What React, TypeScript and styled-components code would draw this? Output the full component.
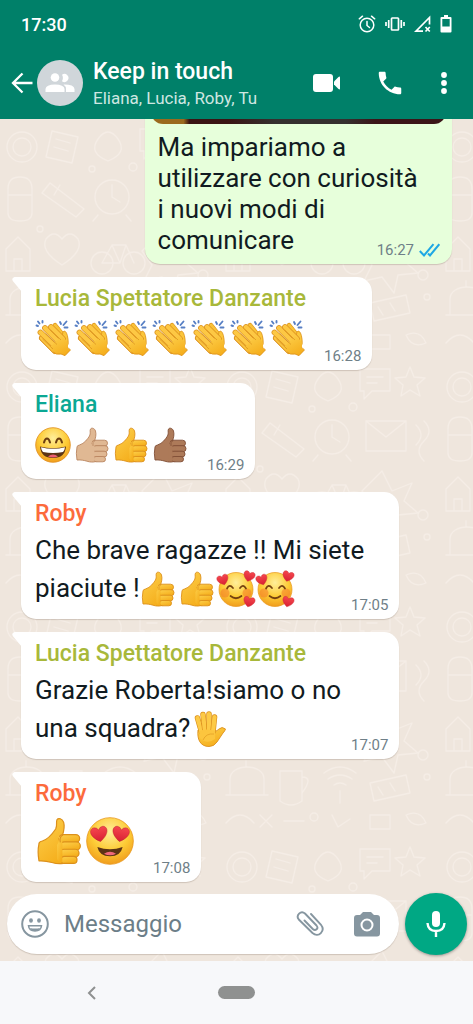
import React from "react";
import styled, { createGlobalStyle } from "styled-components";

const GlobalStyle = createGlobalStyle`
  *, *::before, *::after { box-sizing: border-box; }
  body { margin: 0; font-family: Roboto, "Liberation Sans", sans-serif; color: #111b21; }
  button { border: 0; padding: 0; background: none; color: inherit; font: inherit; cursor: pointer; }
  svg { display: block; flex: none; }
`;

const Screen = styled.div`
  display: flex;
  flex-direction: column;
  height: 100vh;
  overflow: hidden;
`;

const Header = styled.header`
  background: #008069;
  color: #fff;
  padding-bottom: 12px;
  z-index: 1;
`;

const StatusBar = styled.div`
  display: flex;
  align-items: center;
  justify-content: space-between;
  height: 48px;
  padding: 0 21px;
`;

const Clock = styled.time`
  font-size: 18px;
  font-weight: 500;
`;

const StatusIcons = styled.div`
  display: flex;
  align-items: center;
  gap: 9px;
`;

const Toolbar = styled.div`
  display: flex;
  align-items: center;
  height: 59px;
  padding: 10px 11px 0 10px;
`;

const IconButton = styled.button<{ $width: number }>`
  display: flex;
  align-items: center;
  justify-content: center;
  width: ${(p) => p.$width}px;
  height: 48px;
  flex: none;
`;

const Avatar = styled.div`
  display: flex;
  align-items: center;
  justify-content: center;
  width: 46px;
  height: 46px;
  margin: 0 10px 0 4px;
  border-radius: 50%;
  background: #d0d6da;
  flex: none;
`;

const Titles = styled.div`
  flex: 1;
  min-width: 0;
  padding-top: 3px;
`;

const Title = styled.h1`
  margin: 0;
  font-size: 23px;
  line-height: 28px;
  font-weight: 500;
`;

const Subtitle = styled.p`
  margin: 0;
  font-size: 17px;
  line-height: 24px;
  color: #cfe7e2;
  white-space: nowrap;
  overflow: hidden;
  text-overflow: ellipsis;
`;

const Chat = styled.main`
  position: relative;
  display: flex;
  flex-direction: column;
  flex: 1;
  min-height: 0;
  overflow: hidden;
  background: #efe6dd;
`;

const Wallpaper = styled.svg`
  position: absolute;
  inset: 0;
  width: 100%;
  height: 100%;
`;

const Messages = styled.ul`
  position: relative;
  display: flex;
  flex-direction: column;
  justify-content: flex-end;
  gap: 13px;
  flex: 1;
  min-height: 0;
  margin: 0;
  padding: 0 21px;
  list-style: none;
`;

const Bubble = styled.li<{ $own?: boolean }>`
  position: relative;
  display: flow-root;
  flex: none;
  align-self: ${(p) => (p.$own ? "flex-end" : "flex-start")};
  width: ${(p) => (p.$own ? "65vw" : "fit-content")};
  max-width: 80vw;
  padding: ${(p) => (p.$own ? "5px 6px 8px" : "8px 11px 12px 14px")};
  border-radius: ${(p) => (p.$own ? "15px" : "0 15px 15px 15px")};
  background: ${(p) => (p.$own ? "#e7ffdb" : "#fff")};
  box-shadow: 0 1px 1px rgba(80, 60, 40, 0.2);
`;

const TailShape = styled.svg`
  position: absolute;
  left: -9px;
  top: 0;
`;

const Sender = styled.div<{ $color: string }>`
  margin-bottom: 3px;
  font-size: 23px;
  line-height: 28px;
  font-weight: 500;
  color: ${(p) => p.$color};
`;

const Text = styled.p<{ $line: number }>`
  margin: 0;
  font-size: 26px;
  line-height: ${(p) => p.$line}px;
`;

const OwnText = styled(Text)`
  padding: 8px 17px 0 7px;
`;

const Stamp = styled.span<{ $line: number; $own?: boolean }>`
  float: right;
  display: flex;
  align-items: center;
  gap: 5px;
  margin: ${(p) =>
    p.$own ? `${p.$line - 16}px -11px -4px 16px` : `${p.$line - 12}px 0 -8px 16px`};
  font-size: 15px;
  line-height: 20px;
  color: #6f7f88;
`;

const Photo = styled.div`
  height: 60px;
  border-radius: 12px;
  background: linear-gradient(90deg, #9b6a1e 0 11%, #3a1413 13% 26%, #35302f 42% 66%, #3b1518 76% 100%);
`;

const EmojiSvg = styled.svg`
  display: inline-block;
  vertical-align: middle;
  margin: -3px 3px 0 0;
  overflow: visible;
`;

const Composer = styled.form`
  position: relative;
  display: flex;
  align-items: center;
  gap: 6px;
  padding: 11px 6px 6px 7px;
`;

const Field = styled.div`
  display: flex;
  align-items: center;
  flex: 1;
  min-width: 0;
  height: 60px;
  padding: 0 4px 0 7px;
  border-radius: 30px;
  background: #fff;
  box-shadow: 0 1px 1px rgba(80, 60, 40, 0.2);
`;

const MessageInput = styled.input`
  flex: 1;
  min-width: 0;
  border: 0;
  outline: 0;
  padding: 0 0 0 8px;
  background: none;
  font: inherit;
  font-size: 24px;
  &::placeholder { color: #6c7e88; opacity: 1; }
`;

const MicButton = styled.button`
  display: flex;
  align-items: center;
  justify-content: center;
  width: 62px;
  height: 62px;
  flex: none;
  border-radius: 50%;
  background: #00a884;
  box-shadow: 0 1px 3px rgba(0, 0, 0, 0.35);
`;

const SystemNav = styled.nav`
  display: grid;
  grid-template-columns: 1fr auto 1fr;
  align-items: center;
  height: 63px;
  flex: none;
  background: #f7f8fa;
`;

const NavBack = styled.button`
  justify-self: center;
  margin-right: 36px;
`;

const NavHome = styled.button`
  width: 37px;
  height: 13px;
  border-radius: 7px;
  background: #8f9190;
`;

const HiddenDefs = styled.svg`
  position: absolute;
`;

const Defs = () => (
  <HiddenDefs width="0" height="0" aria-hidden="true">
    <defs>
      <radialGradient id="face" cx=".5" cy=".3" r=".75">
        <stop offset="0" stopColor="#ffee9a" />
        <stop offset=".55" stopColor="#fdcb35" />
        <stop offset="1" stopColor="#ee9519" />
      </radialGradient>
      <linearGradient id="skin" x1="0" y1="0" x2=".6" y2="1">
        <stop offset="0" stopColor="#fdd14d" />
        <stop offset="1" stopColor="#f5ae1c" />
      </linearGradient>
      <linearGradient id="heart" x1="0" y1="0" x2="0" y2="1">
        <stop offset="0" stopColor="#f5474e" />
        <stop offset="1" stopColor="#d81f32" />
      </linearGradient>
    </defs>
  </HiddenDefs>
);

type EmojiProps = { size?: number; label: string; children: React.ReactNode };
const Emoji = ({ size = 36, label, children }: EmojiProps) => (
  <EmojiSvg width={size} height={size} viewBox="0 0 36 36" role="img" aria-label={label}>
    {children}
  </EmojiSvg>
);

const clapFingers = ["M7 18L20 31", "M5.5 12.5L22 28", "M10 8L25 23", "M16 7L28 19"];
const Clap = () => (
  <Emoji label="applauso">
    <g strokeLinecap="round" fill="none">
      <path d="M20 5.500L30 18" stroke="#dc921c" strokeWidth="5" />
      <path d="M20 5.500L30 18" stroke="#f9c238" strokeWidth="3.800" />
      <path d="M29 20Q26 13 29 11Q32 11 33 19Q34 24 32 27" fill="#fbc63b" stroke="#dc921c" strokeWidth=".8" />
      <path d="M7 18L20 31" stroke="#d98b1b" strokeWidth="6" />
      {clapFingers.map((d) => (
        <React.Fragment key={d}>
          <path d={d} stroke="#dc921f" strokeWidth="5.800" />
          <path d={d} stroke="#fdc844" strokeWidth="4.400" />
        </React.Fragment>
      ))}
    </g>
    <path d="M15 27L26 16Q34 20 33 28L35.500 30L30 35.800L26 34Q19 36 15 27Z" fill="url(#skin)" />
    <path d="M18 32Q21 35 26 34L30 35.600L35.400 30L33 27.500" fill="none" stroke="#df951f" strokeWidth=".9" />
    <path d="M10.500 13.500L22 24.500M15.500 10L26 20M7.500 19L18 29" fill="none" stroke="#dc961f" strokeWidth=".8" />
    <g stroke="#577fc4" strokeWidth="1.900" strokeLinecap="round">
      <path d="M1.500 5.500L3 6M3 1.500L4.500 3.500M7.500 1V2.500M25 2L26 4M28.500 5L31.500 1.500M29.500 7.500L32.500 7.500" />
    </g>
  </Emoji>
);

const tones = {
  yellow: { fill: "url(#skin)", line: "#dc901b" },
  light: { fill: "#e0b893", line: "#b9855f" },
  brown: { fill: "#ad7a59", line: "#804e35" },
};
const Thumb = ({ tone = "yellow", size }: { tone?: keyof typeof tones; size?: number }) => {
  const { fill, line } = tones[tone];
  return (
    <Emoji label="pollice in su" size={size}>
      <g transform="translate(1.500 0)">
        <g fill={fill} stroke={line} strokeWidth=".9" strokeLinejoin="round">
          <path d="M1.500 20Q1.500 18.500 4 18C9 16.500 12 12 14 9C15.500 6 14 4 15 2C16 .5 19 1 20 4C21 7.500 20 11 19 14L24 16V32Q22 35 18 35C12 35.500 10 32.500 1.500 33Q.2 26 1.500 20Z" />
          <rect x="16.500" y="13.200" width="15.500" height="6" rx="3" />
          <rect x="17.500" y="18.700" width="15" height="6" rx="3" />
          <rect x="17.500" y="24.200" width="14" height="5.700" rx="2.800" />
          <rect x="18" y="29.500" width="12" height="5.300" rx="2.600" />
        </g>
        <path d="M15.500 14.500Q18 17 15 21V31.500Q16 34 19 34.200V15.500Z" fill={fill} />
        <path d="M19.500 13.500Q16.500 15 17.500 19" stroke={line} strokeWidth=".8" fill="none" />
      </g>
    </Emoji>
  );
};

const Grin = () => (
  <Emoji label="sorriso">
    <circle cx="18" cy="18" r="17.300" fill="url(#face)" stroke="#e08d1b" strokeWidth=".8" />
    <path d="M9 15.500Q10 11.500 12 11.500T15 15.500M21 15.500Q22 11.500 24 11.500T27 15.500" fill="none" stroke="#6b3c10" strokeWidth="2" strokeLinecap="round" />
    <path d="M5 19.500Q18 23 31 19.500Q30 31 18 31T5 19.500Z" fill="#5c3415" />
    <path d="M6 20.200Q18 23.500 30 20.200Q29.500 24 28 25Q18 27 8 25Q6.500 24 6 20.200Z" fill="#fff" />
    <path d="M13 29.500Q18 25.500 23 29.500Q18 31.500 13 29.500Z" fill="#ef5f73" />
  </Emoji>
);

const heartPath = "M0 5C-8 0-6-5-3-5Q-1-5 0-3Q1-5 3-5C6-5 8 0 0 5Z";
const Hearts = () => (
  <Emoji label="faccina con cuori">
    <circle cx="18" cy="18.500" r="17" fill="url(#face)" stroke="#e8971c" strokeWidth=".7" />
    <circle cx="7" cy="22" r="4.500" fill="#f47b2c" opacity=".55" />
    <circle cx="29" cy="22" r="4.500" fill="#f47b2c" opacity=".55" />
    <path d="M9 17.500Q11.500 12.500 15 17M22 17Q25 12.500 28 17.500M12.500 25Q18 29.500 23.500 25" fill="none" stroke="#75410f" strokeWidth="1.700" strokeLinecap="round" />
    <g fill="url(#heart)" stroke="#c92935" strokeWidth=".4">
      <path d={heartPath} transform="translate(5 9) rotate(-18)" />
      <path d={heartPath} transform="translate(31 5.500) rotate(16)" />
      <path d={heartPath} transform="translate(31 31) rotate(14)" />
    </g>
  </Emoji>
);

const HeartEyes = () => (
  <Emoji label="occhi a cuore" size={48}>
    <circle cx="18" cy="18" r="17.500" fill="url(#face)" stroke="#e8971c" strokeWidth=".6" />
    <g fill="url(#heart)" stroke="#b7202d" strokeWidth=".3">
      <path d={heartPath} transform="translate(10 13) rotate(-10) scale(1.100)" />
      <path d={heartPath} transform="translate(26 13) rotate(10) scale(1.100)" />
    </g>
    <path d="M8.500 22.500Q18 26 27.500 22.500Q26 29.500 18 29.500T8.500 22.500Z" fill="#5c3415" />
    <path d="M13.500 27.500Q18 24.500 22.500 27.500Q18 30 13.500 27.500Z" fill="#f0697a" />
  </Emoji>
);

const handFingers = ["M5.5 7L9.5 21", "M11 3.5L13 20", "M17 3L17 20", "M22.5 6L21 21"];
const RaisedHand = () => (
  <Emoji label="mano alzata">
    <g transform="translate(2 0)">
      <path d="M6 19L22 19Q25 21 27 18Q30 15 33.500 18Q33 20 31 22L25 31Q22 35.500 17 35.500C8 35.500 5 28 6 19Z" fill="url(#skin)" stroke="#dc901b" strokeWidth=".9" />
      <g strokeLinecap="round">
        {handFingers.map((d) => (
          <React.Fragment key={d}>
            <path d={d} stroke="#dc901b" strokeWidth="5.500" />
            <path d={d} stroke="#fdca47" strokeWidth="4.200" />
          </React.Fragment>
        ))}
      </g>
      <path d="M7 20Q14 17 23 20L23 28Q15 34 8 27Z" fill="#fcc53e" />
      <path d="M11 29Q14 22 22 23" fill="none" stroke="#e5a126" strokeWidth=".8" />
    </g>
  </Emoji>
);

const Tail = () => (
  <TailShape width="10" height="15" viewBox="0 0 10 15" aria-hidden="true">
    <path d="M2.500 0H10V15L.8 4Q-.8 1 2.500 0Z" fill="#fff" />
  </TailShape>
);

const Doodles = () => (
  <Wallpaper aria-hidden="true">
    <defs>
      <pattern id="doodles" width="220" height="240" patternUnits="userSpaceOnUse">
        <g fill="none" stroke="#f5ede6" strokeWidth="1.300" strokeLinecap="round" strokeLinejoin="round">
          <circle cx="22" cy="28" r="15" />
          <circle cx="22" cy="28" r="9" />
          <path d="M52 12l26 6-6 26-26-6zM56 20l14 4M54 28l14 4" />
          <path d="M98 20q10-14 20 0t-10 22q-20-8-10-22z" />
          <path d="M140 10h30v22h-18l-8 8v-8h-4zM147 18h16M147 24h10" />
          <path d="M190 8l4 10 11 1-8 7 3 11-10-6-9 6 2-11-8-7 11-1z" />
          <path d="M8 70q0-12 12-12t12 12v24q0 8-12 8t-12-8zM8 76h24" />
          <path d="M50 64l34 26-8 8-34-24zM60 66l-6 10" />
          <circle cx="112" cy="78" r="17" />
          <path d="M112 66v12l8 5M98 96l-5 6M126 96l5 6" />
          <path d="M146 62h40v30h-40zM146 62l20 16 20-16" />
          <path d="M204 62q10 10 0 20t0 20M196 66q10 10 0 20" />
          <path d="M6 130l12-12 12 12v22h-24zM14 152v-12h8v12" />
          <path d="M46 120q8-10 16 0 8-10 16 0 6 12-16 26-22-14-16-26z" />
          <circle cx="102" cy="144" r="11" /><circle cx="134" cy="144" r="11" />
          <path d="M102 144l10-18h14l8 18M112 126l8 18h-18M120 144l6-18" />
          <path d="M162 112l10 20 20-8-8 18 14 12-20 2-4 18-12-16-18 4 8-16-10-14z" />
          <path d="M10 180c0-16 34-16 34 0v16h-34zM6 196h42M26 168v-6" />
          <path d="M60 172h22v30q-11 8-22 0zM82 178q12 0 0 16" />
          <path d="M104 174q16-12 32 0M108 180q12-8 24 0M114 186q6-4 12 0M120 192v12" />
          <path d="M150 184l36-8 4 18-36 8zM158 188l5 8M170 184l5 8" />
          <circle cx="203" cy="156" r="5" /><circle cx="207" cy="178" r="3" /><circle cx="92" cy="50" r="3" />
          <circle cx="133" cy="48" r="4" /><circle cx="40" cy="110" r="3" /><circle cx="94" cy="218" r="4" />
          <path d="M6 224q14-16 28 0M40 216l12 12M52 216l-12 12M64 222h20M112 216l6 12 12-8M150 216h20v14h-20zM186 216q14-6 20 8-14 6-20-8z" />
        </g>
      </pattern>
    </defs>
    <rect width="100%" height="100%" fill="url(#doodles)" />
  </Wallpaper>
);

type MessageProps = { name: string; color: string; time: string; line?: number; children: React.ReactNode };
const Message = ({ name, color, time, line = 38, children }: MessageProps) => (
  <Bubble>
    <Tail />
    <Sender $color={color}>{name}</Sender>
    <Text $line={line}>
      {children}
      <Stamp $line={line}>{time}</Stamp>
    </Text>
  </Bubble>
);

export default function App() {
  return (
    <Screen>
      <GlobalStyle />
      <Defs />
      <Header>
        <StatusBar>
          <Clock>17:30</Clock>
          <StatusIcons>
            <svg width="18" height="18" viewBox="0 0 18 18" fill="none" stroke="#fff" strokeWidth="1.500" strokeLinecap="round">
              <circle cx="9" cy="10" r="6.800" />
              <path d="M9 6.500V10.500L11.500 12.500M1.300 3.800L4.500 1.200M16.700 3.800L13.500 1.200" />
            </svg>
            <svg width="20" height="16" viewBox="0 0 20 16" fill="none" stroke="#fff" strokeWidth="1.700">
              <rect x="6.500" y="2" width="7" height="12" rx=".7" />
              <path d="M3.700 4V12M16.300 4V12M1 6V10M19 6V10" />
            </svg>
            <svg width="17" height="18" viewBox="0 0 17 18" fill="none" stroke="#fff" strokeWidth="1.700">
              <path d="M9 16.200H2L15.500 2.500V9.500M11.500 12L15.800 16.500M15.800 12L11.500 16.500" />
            </svg>
            <svg width="12" height="18" viewBox="0 0 12 18">
              <path d="M4 0H8V2H10.500Q11.500 2 11.500 3V16.500Q11.500 17.500 10.500 17.500H1.500Q.5 17.500 .5 16.500V3Q.5 2 1.500 2H4ZM2.300 4V11.500H9.700V4Z" fill="#fff" fillRule="evenodd" />
            </svg>
          </StatusIcons>
        </StatusBar>
        <Toolbar>
          <IconButton $width={23} type="button" aria-label="Indietro">
            <svg width="22" height="22" viewBox="0 0 22 22" fill="none" stroke="#fff" strokeWidth="2.300">
              <path d="M21.500 11H2M11.500 1.500L2 11L11.500 20.500" />
            </svg>
          </IconButton>
          <Avatar>
            <svg width="30" height="20" viewBox="0 0 30 20" fill="#fff">
              <circle cx="10" cy="4.500" r="4.300" />
              <path d="M.5 19V16Q1 11.500 10 11.500T19.500 16V19Z" />
              <path d="M17 1.800A4 4 0 1 1 17 8.200Q18.800 5 17 1.800ZM18.500 11.600Q29 11.500 29.500 16V19H21V16Q21 13.500 18.500 11.600Z" />
            </svg>
          </Avatar>
          <Titles>
            <Title>Keep in touch</Title>
            <Subtitle>Eliana, Lucia, Roby, Tu</Subtitle>
          </Titles>
          <IconButton $width={56} type="button" aria-label="Videochiamata">
            <svg width="28" height="18" viewBox="0 0 28 18" fill="#fff">
              <rect x="0" y="0" width="20" height="18" rx="3" />
              <path d="M21 7.500L25.500 3Q27 2 27 3.500V14.500Q27 16 25.500 15L21 10.500Z" />
            </svg>
          </IconButton>
          <IconButton $width={70} type="button" aria-label="Chiama">
            <svg width="30" height="30" viewBox="0 0 24 24" fill="#fff">
              <path d="M6.620 10.790c1.440 2.830 3.760 5.140 6.590 6.590l2.200-2.200c.27-.27.67-.36 1.020-.24 1.120.37 2.330.57 3.570.57.55 0 1 .45 1 1V20c0 .55-.45 1-1 1-9.390 0-17-7.610-17-17 0-.55.45-1 1-1h3.500c.55 0 1 .45 1 1 0 1.250.2 2.450.57 3.570.11.35.03.74-.25 1.020l-2.200 2.200z" />
            </svg>
          </IconButton>
          <IconButton $width={37} type="button" aria-label="Altro">
            <svg width="6" height="22" viewBox="0 0 6 22" fill="#fff">
              <circle cx="3" cy="3" r="2.900" /><circle cx="3" cy="11" r="2.900" /><circle cx="3" cy="19" r="2.900" />
            </svg>
          </IconButton>
        </Toolbar>
      </Header>

      <Chat>
        <Doodles />
        <Messages>
          <Bubble $own>
            <Photo role="img" aria-label="Foto" />
            <OwnText $line={31}>
              Ma impariamo a utilizzare con curiosità i nuovi modi di comunicare
              <Stamp $own $line={31}>
                16:27
                <svg width="21" height="14" viewBox="0 0 21 14" fill="none" stroke="#1fa7e4" strokeWidth="2">
                  <path d="M.8 8L5 12.500L14.500 1.200M9 10.500L11 12.500L20.300 1.200" />
                </svg>
              </Stamp>
            </OwnText>
          </Bubble>
          <Message name="Lucia Spettatore Danzante" color="#a8b83a" time="16:28" line={42}>
            <Clap /><Clap /><Clap /><Clap /><Clap /><Clap /><Clap />
          </Message>
          <Message name="Eliana" color="#0ba894" time="16:29" line={45}>
            <Grin /><Thumb tone="light" /><Thumb /><Thumb tone="brown" />
          </Message>
          <Message name="Roby" color="#fc6b3c" time="17:05">
            Che brave ragazze !! Mi siete piaciute !<Thumb /><Thumb /><Hearts /><Hearts />
          </Message>
          <Message name="Lucia Spettatore Danzante" color="#a8b83a" time="17:07">
            Grazie Roberta!siamo o no una squadra?<RaisedHand />
          </Message>
          <Message name="Roby" color="#fc6b3c" time="17:08" line={59}>
            <Thumb size={48} /><HeartEyes />
          </Message>
        </Messages>

        <Composer onSubmit={(e) => e.preventDefault()}>
          <Field>
            <IconButton $width={42} type="button" aria-label="Emoji">
              <svg width="28" height="28" viewBox="0 0 28 28" fill="none" stroke="#8696a0" strokeWidth="2">
                <circle cx="14" cy="14" r="12.800" />
                <ellipse cx="10" cy="10.500" rx="1.900" ry="2.300" fill="#8696a0" stroke="none" />
                <ellipse cx="18" cy="10.500" rx="1.900" ry="2.300" fill="#8696a0" stroke="none" />
                <path d="M7.500 15.700H20.500Q20 21 14 21T7.500 15.700Z" strokeWidth="1.500" />
                <path d="M9 18Q14 19 19 18Q18 21 14 21T9 18Z" fill="#8696a0" stroke="none" />
              </svg>
            </IconButton>
            <MessageInput aria-label="Messaggio" placeholder="Messaggio" />
            <IconButton $width={58} type="button" aria-label="Allega">
              <svg width="28" height="26" viewBox="0 0 28 26" fill="none" stroke="#8696a0" strokeWidth="1.900" strokeLinecap="round">
                <path d="M15 3L24.800 13.500C30 20 22.500 27 16.500 22L2.800 8.500C-.5 4.500 4.800-1 9 2.500L20.500 14.500C23 17.500 19.500 20.500 16.800 18L8.500 9.500" />
              </svg>
            </IconButton>
            <IconButton $width={56} type="button" aria-label="Fotocamera">
              <svg width="26" height="25" viewBox="0 0 26 25">
                <path d="M9 0H17L20 3H23Q26 3 26 6V21.500Q26 24.500 23 24.500H3Q0 24.500 0 21.500V6Q0 3 3 3H6Z" fill="#8696a0" />
                <circle cx="13" cy="13" r="5.500" fill="none" stroke="#fff" strokeWidth="2" />
              </svg>
            </IconButton>
          </Field>
          <MicButton type="button" aria-label="Messaggio vocale">
            <svg width="20" height="28" viewBox="0 0 20 28">
              <rect x="6" y="1" width="8" height="16" rx="4" fill="#fff" />
              <path d="M1.500 13Q2 21 10 21T18.500 13M10 21V27" fill="none" stroke="#fff" strokeWidth="2.400" />
            </svg>
          </MicButton>
        </Composer>
      </Chat>

      <SystemNav aria-label="Sistema">
        <NavBack type="button" aria-label="Indietro di sistema">
          <svg width="9" height="14" viewBox="0 0 9 14" fill="none" stroke="#8f9190" strokeWidth="2">
            <path d="M8 1L2 7L8 13" />
          </svg>
        </NavBack>
        <NavHome type="button" aria-label="Home" />
      </SystemNav>
    </Screen>
  );
}
